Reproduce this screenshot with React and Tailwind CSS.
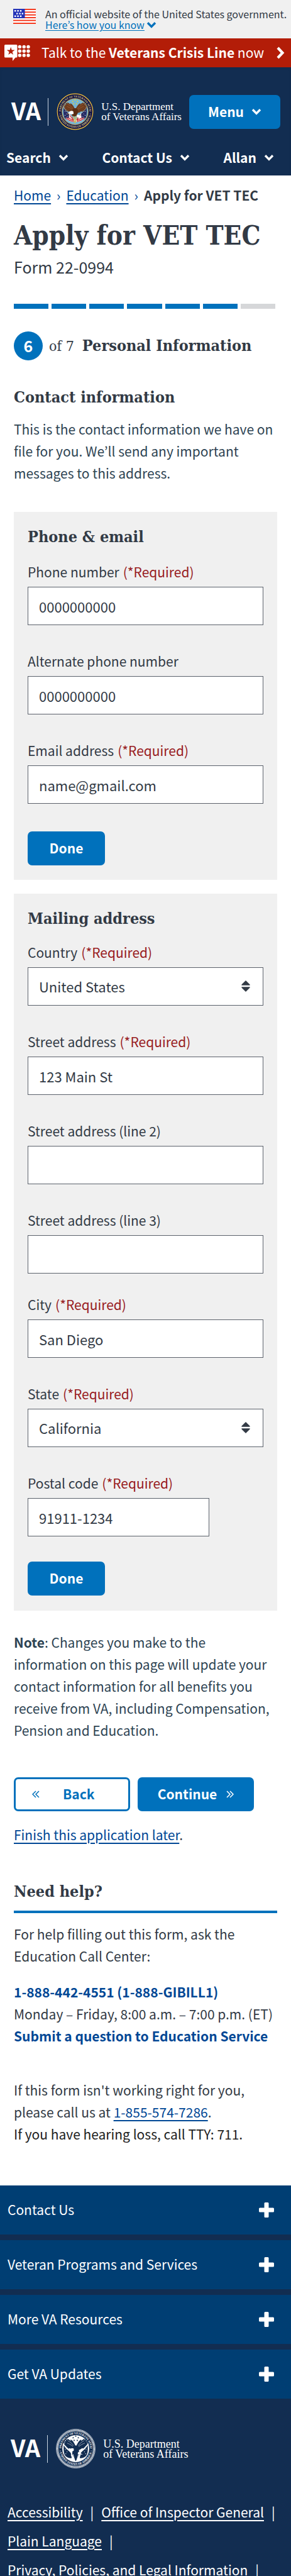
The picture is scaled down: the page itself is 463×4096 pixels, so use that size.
import React from "react";

function ChevronDown({ className = "" }) {
  return (
    <svg viewBox="0 0 16 11" className={`h-[11px] w-4 ${className}`} fill="none" aria-hidden="true">
      <path d="M2 2.2 8 8.4 14 2.2" stroke="currentColor" strokeWidth="3.4" />
    </svg>
  );
}

function Flag() {
  return (
    <svg viewBox="0 0 36 24" className="h-6 w-9 shrink-0" aria-hidden="true">
      <rect width="36" height="24" fill="#fff" />
      {[0, 4.4, 8.8, 13.2, 17.6, 22.2].map((y) => (
        <rect key={y} y={y} width="36" height="1.8" fill="#f4290c" />
      ))}
      <rect width="18.5" height="15" fill="#2433b8" />
      <g fill="#fff">
        <path d="M2 2h2.4v2.4H2zM6.4 2h2.4v2.4H6.4zM10.8 2h2.4v2.4h-2.4zM5 6.4h2.4v2.4H5zM9.4 6.4h2.4v2.4H9.4zM13.6 6.4H16v2.4h-2.4zM2 10.6h2.4V13H2zM6.4 10.6h2.4V13H6.4zM10.8 10.6h2.4V13h-2.4z" />
      </g>
    </svg>
  );
}

function CrisisIcon() {
  return (
    <svg viewBox="0 0 42 26" className="h-[26px] w-[42px] shrink-0" fill="#fff" aria-hidden="true">
      <path d="M1.5 0H19a1.5 1.5 0 0 1 1.500 1.500V19a1.500 1.500 0 0 1-1.500 1.500h-1.500L13 26v-5.500H1.500A1.500 1.500 0 0 1 0 19V1.500A1.500 1.500 0 0 1 1.500 0z" />
      <path d="m10.200 3.800 1.500 4.700h4.900l-4 2.900 1.500 4.700-3.900-2.900-4 2.900 1.500-4.700-3.900-2.900h4.900z" fill="#b31d08" />
      {[3.4, 10.2, 17].map((y) => [24.4, 31.2, 38].map((x) => <circle key={`${x}-${y}`} cx={x} cy={y} r="2.7" />))}
    </svg>
  );
}

const STAR = "M0-2.600.7-.8 2.500-.8 1 .4 1.600 2.200 0 1.100-1.600 2.200-1 .4-2.500-.8-.7-.8z";
const STARS = [[50, 18.500], [43.500, 22.500], [56.500, 22.500], [46, 29], [54, 29]];

function RingText({ id, color }) {
  return (
    <g fill={color} fontSize="8" fontWeight="bold" fontFamily="Liberation Serif, serif" textAnchor="middle">
      <path id={`${id}-top`} d="M11.500 50a38.500 38.500 0 0 1 77 0" fill="none" />
      <path id={`${id}-bottom`} d="M6.500 50a43.500 43.500 0 0 0 87 0" fill="none" />
      <text fontSize="7.500"><textPath href={`#${id}-top`} startOffset="50%">DEPARTMENT OF VETERANS AFFAIRS</textPath></text>
      <text><textPath href={`#${id}-bottom`} startOffset="50%">UNITED STATES OF AMERICA</textPath></text>
      <circle cx="9" cy="56" r="1.100" />
      <circle cx="91" cy="56" r="1.100" />
    </g>
  );
}

function LeftWing({ fill }) {
  return (
    <path
      fill={fill}
      d="M23 25c3 1 5 2 7 4l-2-4c4 1 7 3 9 6l0-4c4 2 7 5 9 9 2 3 3 6 4 10l1 8-9-1c-3-1-5-2-7-4l-7 2 3-3-8 0 4-3-8-1 5-2-7-3 6-1-6-4 7 0-5-4 7 1z"
    />
  );
}

function ColorSeal() {
  return (
    <svg viewBox="0 0 100 100" className="size-[59px] shrink-0" role="img" aria-label="Seal of the Department of Veterans Affairs">
      <circle cx="50" cy="50" r="50" fill="#1a1c4b" />
      <circle cx="50" cy="50" r="48" fill="none" stroke="#f0c63c" strokeWidth="2" />
      <circle cx="50" cy="50" r="46" fill="#17194a" />
      <circle cx="50" cy="50" r="36" fill="#c9a94a" />
      <circle cx="50" cy="50" r="34.500" fill="#74b4d6" />
      <RingText id="color" color="#d9c27a" />
      {STARS.map(([x, y]) => <path key={`${x}-${y}`} d={STAR} transform={`translate(${x} ${y})`} fill="#f5d327" />)}
      <path d="M19 39c3 9 9 12 18 18l2 14c-7 2-14 1-18-5-3-9-3-18-2-27z" fill="#262a63" />
      <path d="M81 39c-3 9-9 12-18 18l-2 14c7 2 14 1 18-5 3-9 3-18 2-27z" fill="#262a63" />
      <path d="M18 38 39 61M82 38 61 61" stroke="#e8e3d4" strokeWidth="1" />
      <g fill="#fff">
        <circle cx="23" cy="50" r=".9" /><circle cx="27" cy="56" r=".9" /><circle cx="23" cy="60" r=".9" /><circle cx="29" cy="63" r=".9" />
        <circle cx="77" cy="50" r=".9" /><circle cx="73" cy="56" r=".9" /><circle cx="77" cy="60" r=".9" /><circle cx="71" cy="63" r=".9" />
      </g>
      <path d="M34 53c4 8 8 15 15 20l-3 5c-8 0-17-4-22-11l3-1 6 3z" fill="#f7efe8" />
      <path d="M66 53c-4 8-8 15-15 20l3 5c8 0 17-4 22-11l-3-1-6 3z" fill="#f7efe8" />
      <path d="M26 67c5 5 11 8 18 9M31 66c4 3 9 6 14 7M36 60c2 5 6 9 10 12M74 67c-5 5-11 8-18 9M69 66c-4 3-9 6-14 7M64 60c-2 5-6 9-10 12" stroke="#c8202f" strokeWidth="2" fill="none" />
      <LeftWing fill="#6f3c1e" />
      <g transform="translate(101 0) scale(-1 1)"><LeftWing fill="#6f3c1e" /></g>
      <path d="M30 30c6 3 11 7 15 13M28 36c6 2 11 5 16 9M71 30c-6 3-11 7-15 13M73 36c-6 2-11 5-16 9" stroke="#a86a3a" strokeWidth="1" fill="none" />
      <path d="M44 42c4-2 9-2 12 1 3 5 2 12-3 19-4 2-9 1-12-2-1-6 0-13 3-18z" fill="#5a2d14" />
      <path d="M45 49c-4-2-9-1-11 3l-3 3 4 0c3 2 7 3 11 1z" fill="#fff" />
      <path d="m31 54-2 3 4-1z" fill="#f2b92c" />
      <path d="M55 58c5 0 10 2 13 7-5 3-10 2-14-2z" fill="#fff" />
      <path d="m45 62 3 18M50 62v19M54 63l-2 16" stroke="#e9c23a" strokeWidth="1.600" />
      <path d="m42 64 4 14M57 66l-1 12" stroke="#c8202f" strokeWidth="1.500" />
    </svg>
  );
}

function WhiteSeal() {
  return (
    <svg viewBox="0 0 100 100" className="size-[63px] shrink-0" role="img" aria-label="Seal of the Department of Veterans Affairs">
      <circle cx="50" cy="50" r="49.200" fill="none" stroke="#fff" strokeWidth="1" />
      <circle cx="50" cy="50" r="46.500" fill="none" stroke="#fff" strokeWidth="3.400" strokeDasharray="2.200 1.100" />
      <circle cx="50" cy="50" r="44" fill="none" stroke="#fff" strokeWidth=".8" />
      <circle cx="50" cy="50" r="34" fill="#fff" />
      <g transform="translate(50 50) scale(.95) translate(-50 -50)"><RingText id="white" color="#fff" /></g>
      {STARS.map(([x, y]) => <path key={`${x}-${y}`} d={STAR} transform={`translate(${x} ${y})`} fill="#122d51" />)}
      <LeftWing fill="#122d51" />
      <g transform="translate(101 0) scale(-1 1)"><LeftWing fill="#122d51" /></g>
      <path d="M30 30c6 3 11 7 15 13M28 36c6 2 11 5 16 9M71 30c-6 3-11 7-15 13M73 36c-6 2-11 5-16 9" stroke="#fff" strokeWidth=".8" fill="none" />
      <path d="M20 41c3 8 8 12 17 17l3 16c-8 1-14-2-18-8-3-8-3-17-2-25zM80 41c-3 8-8 12-17 17l-3 16c8 1 14-2 18-8 3-8 3-17 2-25zM43 42h14l2 22-9 18-9-18z" fill="#122d51" />
      <path d="m18 38 22 24M82 38 60 62" stroke="#fff" strokeWidth="2.600" />
      <path d="M38 66l7 11M62 66l-7 11M43 64l4 14M57 64l-4 14" stroke="#fff" strokeWidth="1.500" />
      <path d="M45 50c-4-2-8-1-11 3l2 3c3 1 6 1 9-1zM56 58l12 7-13-1z" fill="#fff" />
      <g fill="#fff">
        <circle cx="24" cy="52" r="1" /><circle cx="28" cy="58" r="1" /><circle cx="25" cy="63" r="1" />
        <circle cx="76" cy="52" r="1" /><circle cx="72" cy="58" r="1" /><circle cx="75" cy="63" r="1" />
      </g>
    </svg>
  );
}

function Logo({ seal, nameSize }) {
  return (
    <a href="#home" className="flex items-center text-white">
      <span className="pb-1.5 text-[38px] leading-[46px] font-bold">VA</span>
      <span className="mr-[13px] ml-[11px] h-11 w-px bg-slate-300" />
      {seal}
      <span className={`ml-3 font-['Liberation_Serif',serif] leading-4 whitespace-nowrap ${nameSize}`}>
        U.S. Department
        <br />
        of Veterans Affairs
      </span>
    </a>
  );
}

function Field({ id, label, required, value = "", options, className = "" }) {
  const box = "h-[61px] w-full appearance-none rounded-none border border-[#5b616b] bg-white px-[17px] text-[22px] text-[#323a45]";
  return (
    <div className={className}>
      <label htmlFor={id} className="mb-[9px] block leading-[30px]">
        {label}
        {required && <span className="ml-1.5 text-[#981b1e]">(*Required)</span>}
      </label>
      {options ? (
        <div className="relative">
          <select id={id} defaultValue={value} className={box}>
            {options.map((o) => <option key={o}>{o}</option>)}
          </select>
          <svg viewBox="0 0 14 18" className="pointer-events-none absolute top-[21px] right-[21px] h-[18px] w-3.5" fill="#323a45" aria-hidden="true">
            <path d="M7 0 13.600 6.600V7.700H.4V6.600zM7 18l6.600-6.600v-1.100H.4v1.100z" />
          </svg>
        </div>
      ) : (
        <input id={id} type="text" defaultValue={value} className={box} />
      )}
    </div>
  );
}

const serif = "font-['DejaVu_Serif_Condensed','DejaVu_Serif',serif] font-bold";
const primary = "h-[54px] rounded-[7px] bg-[#0071bc] font-bold text-white";
const link = "text-[#004795] underline underline-offset-4";

function DoubleArrow({ flip }) {
  return (
    <svg viewBox="0 0 12 12" className={flip ? "size-3 rotate-180" : "size-3"} fill="none" stroke="currentColor" strokeWidth="1.500" aria-hidden="true">
      <path d="m1 1 5 5-5 5M6 1l5 5-5 5" />
    </svg>
  );
}

const footerLinks = [["Accessibility", "Office of Inspector General"], ["Plain Language"], ["Privacy, Policies, and Legal Information"]];

export default function App() {
  return (
    <div className="max-h-screen overflow-hidden bg-white font-['Noto_Sans_CJK_KR',sans-serif] text-[21px] text-[#323a45]">
      <div className="flex gap-[15px] bg-[#f0f0f0] pt-[14px] pb-[13px] pl-[21px]">
        <Flag />
        <div className="text-[16px] leading-[17px] whitespace-nowrap">
          <p>An official website of the United States government.</p>
          <button type="button" className="flex items-center gap-[3px] text-[#0071bc]">
            <span className="underline underline-offset-2">Here’s how you know</span>
            <ChevronDown />
          </button>
        </div>
      </div>

      <a href="#crisis" className="flex h-[46px] items-center bg-[#b31d08] pr-[10px] pl-[7px] text-white">
        <CrisisIcon />
        <span className="ml-[17px] flex-1 whitespace-nowrap">
          Talk to the <strong>Veterans Crisis Line</strong> now
        </span>
        <svg viewBox="0 0 13 20" className="h-5 w-[13px]" fill="none" aria-hidden="true">
          <path d="m2 2 7.500 8L2 18" stroke="currentColor" strokeWidth="4.200" />
        </svg>
      </a>

      <header className="bg-[#122d51] pt-[41px] pb-[14px] text-white inset-shadow-sm">
        <div className="flex items-center justify-between pr-[17px] pl-[18px]">
          <Logo seal={<ColorSeal />} nameSize="text-[17px]" />
          <button type="button" className={`${primary} flex w-[145px] items-center justify-center gap-3`}>
            Menu <ChevronDown />
          </button>
        </div>
        <nav className="mt-7 flex justify-between pr-[27px] pl-[10px] leading-[30px] font-bold">
          {["Search", "Contact Us", "Allan"].map((t) => (
            <button key={t} type="button" className="flex items-center gap-3">
              {t} <ChevronDown />
            </button>
          ))}
        </nav>
      </header>

      <main className="px-[22px] pt-4">
        <nav aria-label="Breadcrumb" className="flex gap-[9px] leading-[30px] whitespace-nowrap">
          <a href="#home" className={link}>Home</a>
          <span className="text-[#004795]">›</span>
          <a href="#education" className={link}>Education</a>
          <span className="text-[#004795]">›</span>
          <strong>Apply for VET TEC</strong>
        </nav>

        <h1 className={`${serif} mt-[26px] text-[42px] leading-[48px] whitespace-nowrap`}>Apply for VET TEC</h1>
        <p className="mt-2 text-[25px] leading-[34px]">Form 22-0994</p>

        <div className="mt-[42px] mr-[3px] flex gap-[5px]" role="img" aria-label="Step 6 of 7">
          {[1, 2, 3, 4, 5, 6, 7].map((n) => (
            <span key={n} className={n < 7 ? "h-2 flex-1 bg-[#0071bc]" : "h-2 flex-1 bg-[#d6d7d9]"} />
          ))}
        </div>

        <div className="mt-9 flex items-center whitespace-nowrap">
          <span className="flex size-[46px] items-center justify-center rounded-full bg-[#0071bc] text-[25px] font-bold text-white">6</span>
          <span className="ml-[10px] font-['DejaVu_Serif_Condensed','DejaVu_Serif',serif] text-[23px]">of 7</span>
          <h2 className={`${serif} ml-[13px] text-[25px] leading-8`}>Personal Information</h2>
        </div>

        <h3 className={`${serif} mt-[43px] text-[25px] leading-8`}>Contact information</h3>
        <p className="mt-[17px] leading-[35px] text-[#2e4453]">
          This is the contact information we have on file for you. We’ll send any important messages to this address.
        </p>

        <section className="mt-11 bg-[#f0f0f0] px-[22px] pt-6 pb-[23px]">
          <h4 className={`${serif} text-[25px] leading-8`}>Phone &amp; email</h4>
          <div className="mt-6 flex flex-col gap-[42px]">
            <Field id="phone" label="Phone number" required value="0000000000" />
            <Field id="alt" label="Alternate phone number" value="0000000000" />
            <Field id="email" label="Email address" required value="name@gmail.com" />
          </div>
          <button type="button" className={`${primary} mt-11 w-[123px]`}>Done</button>
        </section>

        <section className="mt-[22px] bg-[#f0f0f0] px-[22px] py-6">
          <h4 className={`${serif} text-[25px] leading-8`}>Mailing address</h4>
          <div className="mt-[22px] flex flex-col gap-[42px]">
            <Field id="country" label="Country" required value="United States" options={["United States", "Canada", "Mexico"]} />
            <Field id="street1" label="Street address" required value="123 Main St" />
            <Field id="street2" label="Street address (line 2)" />
            <Field id="street3" label="Street address (line 3)" />
          </div>
          <div className="mt-[34px] flex flex-col gap-[42px]">
            <Field id="city" label="City" required value="San Diego" />
            <Field id="state" label="State" required value="California" options={["California", "Colorado", "Nevada"]} />
            <Field id="postal" label="Postal code" required value="91911-1234" className="w-[77%]" />
          </div>
          <button type="button" className={`${primary} mt-10 w-[123px]`}>Done</button>
        </section>

        <p className="mt-[33px] leading-[35px] text-[#2e4453]">
          <strong>Note</strong>: Changes you make to the information on this page will update your contact information for all benefits you receive from VA, including Compensation, Pension and Education.
        </p>

        <div className="mt-[57px] mr-[37px] grid grid-cols-2 gap-3">
          <button type="button" className="flex h-[54px] items-center rounded-[7px] border-3 border-[#0071bc] bg-white pl-[26px] font-bold text-[#0071bc]">
            <DoubleArrow flip />
            <span className="ml-[37px]">Back</span>
          </button>
          <button type="button" className={`${primary} flex items-center justify-center gap-[15px]`}>
            Continue
            <DoubleArrow />
          </button>
        </div>
        <p className="mt-5 leading-[34px]">
          <a href="#later" className={link}>Finish this application later</a>.
        </p>

        <h3 className={`${serif} mt-[58px] border-b-4 border-[#0071bc] pb-[14px] text-[25px] leading-8`}>Need help?</h3>
        <div className="mt-4 leading-[35px]">
          <p>For help filling out this form, ask the Education Call Center:</p>
          <p className="mt-[22px] font-bold"><a href="#call" className="text-[#004795]">1-888-442-4551 (1-888-GIBILL1)</a></p>
          <p className="whitespace-nowrap">Monday – Friday, 8:00 a.m. – 7:00 p.m. (ET)</p>
          <p className="font-bold whitespace-nowrap"><a href="#question" className="text-[#004795]">Submit a question to Education Service</a></p>
          <p className="mt-[51px]">
            If this form isn't working right for you, please call us at <a href="#help" className={link}>1-855-574-7286</a>.
          </p>
          <p className="text-[#212121]">If you have hearing loss, call TTY: 711.</p>
        </div>
      </main>

      <footer className="mt-16 bg-[#122d51] text-white">
        <div className="flex flex-col gap-[9px]">
          {["Contact Us", "Veteran Programs and Services", "More VA Resources", "Get VA Updates"].map((t) => (
            <button key={t} type="button" className="flex h-[78px] items-center justify-between bg-[#003e73] pr-[27px] pl-3">
              {t}
              <svg viewBox="0 0 24 24" className="size-6" fill="#fff" aria-hidden="true">
                <rect x="8.500" width="7" height="24" rx="1.500" />
                <rect y="8.500" width="24" height="7" rx="1.500" />
              </svg>
            </button>
          ))}
        </div>
        <div className="mt-12 pl-[17px]">
          <Logo seal={<WhiteSeal />} nameSize="text-[18px]" />
        </div>
        <div className="mt-[46px] px-3 leading-[46px] whitespace-nowrap">
          {footerLinks.map((row) => (
            <p key={row[0]} className="flex gap-3">
              {row.map((t) => (
                <React.Fragment key={t}>
                  <a href="#footer" className="underline underline-offset-4">{t}</a>
                  <span>|</span>
                </React.Fragment>
              ))}
            </p>
          ))}
        </div>
      </footer>
    </div>
  );
}
